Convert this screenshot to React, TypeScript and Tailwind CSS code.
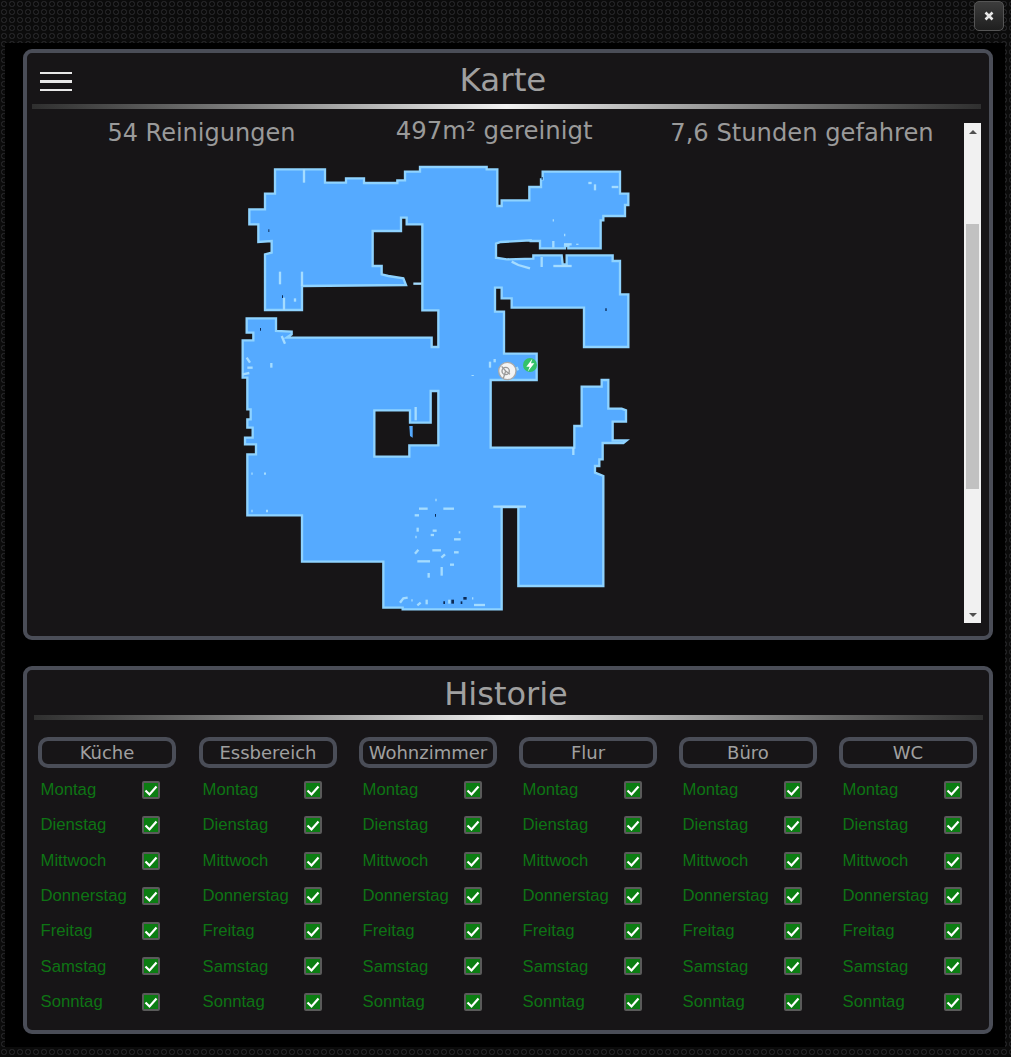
const outline = `M105 25 L255 25 L255 65 L318 65 L318 52 L372 52 L372 66 L472 66 L472 58 L495 58 L495 32 L540 32 L540 18 L740 18 L740 25 L772 25 L772 135 L785 135 L785 118 L868 118 L868 78 L903 78 L903 55 L908 55 L908 32 L1140 32 L1140 98 L1165 98 L1165 132 L1155 132 L1155 165 L1090 165 L1090 178 L1082 178 L1082 262 L985 262 L985 255 L975 255 L975 262 L900 262 L900 240 L872 240 L872 238 L782 243 L768 248 L768 290 L800 295 L880 293 L880 283 L965 283 L968 310 L980 310 L980 283 L1118 283 L1118 300 L1140 300 L1140 400 L1165 400 L1165 558 L1032 558 L1032 440 L815 440 L815 412 L785 412 L785 380 L765 380 L765 452 L792 452 L792 578 L890 578 L890 657 L752 657 L752 860 L1003 860 L1003 795 L1025 795 L1025 677 L1085 677 L1085 657 L1105 657 L1105 743 L1145 743 L1158 748 L1158 782 L1118 782 L1118 838 L1160 838 L1150 846 L1088 846 L1088 895 L1078 895 L1078 915 L1065 915 L1065 935 L1090 945 L1090 1275 L835 1275 L835 1038 L785 1038 L785 1345 L488 1345 L488 1340 L430 1340 L430 1202 L186 1202 L186 1063 L22 1063 L22 880 L48 880 L48 850 L15 850 L15 830 L38 830 L38 800 L22 800 L22 775 L32 775 L32 745 L22 745 L22 650 L8 650 L8 538 L40 538 L40 515 L20 515 L20 472 L108 472 L108 510 L155 512 L155 520 L140 530 L575 530 L575 558 L595 558 L595 448 L547 448 L547 190 L500 190 L500 170 L483 170 L483 210 L398 210 L398 315 L425 315 L425 340 L445 345 L490 352 L498 372 L186 375 L186 447 L75 447 L75 280 L95 275 L95 240 L55 243 L55 190 L28 190 L28 145 L75 145 L75 98 L105 98 Z M403 748 L510 748 L510 785 L572 785 L572 690 L595 690 L595 853 L508 853 L508 887 L403 887 Z`;

const walls = [
  "M192 25 L192 65", "M1045 66 L1055 66", "M1065 70 L1065 88", "M1115 78 L1135 78", "M938 178 L942 178", "M972 222 L976 222",
  "M940 240 L940 260", "M972 250 L995 250", "M1012 248 L1012 252", "M815 302 L835 312 L870 322", "M905 288 L905 318", "M940 315 L995 315",
  "M120 332 L120 370", "M186 332 L186 375", "M165 412 L165 422", "M132 410 L132 447", "M520 368 L545 368", "M125 525 L135 548",
  "M20 590 L30 605", "M22 620 L38 620", "M8 640 L28 636", "M94 606 L94 620", "M750 602 L750 620", "M764 594 L764 604", "M830 618 L834 628", "M698 642 L698 645",
  "M527 738 L527 778", "M1000 860 L1000 882",
  "M34 938 L38 938", "M72 938 L78 938", "M34 1050 L38 1050", "M78 1050 L84 1050",
  "M586 1017 L590 1017", "M537 1043 L563 1043", "M610 1043 L642 1043", "M524 1063 L537 1063", "M533 1100 L533 1112", "M572 1122 L582 1122", "M578 1109 L590 1109",
  "M526 1128 L530 1128", "M656 1114 L661 1114", "M642 1135 L662 1135", "M525 1178 L535 1166", "M577 1168 L603 1168", "M604 1190 L615 1180", "M642 1174 L656 1174",
  "M532 1201 L570 1201", "M630 1211 L642 1211", "M605 1218 L605 1244", "M566 1236 L566 1250", "M480 1325 L490 1312 L503 1310", "M514 1318 L518 1318",
  "M532 1333 L542 1325", "M560 1316 L560 1330", "M628 1316 L628 1328", "M696 1312 L700 1312", "M702 1332 L735 1332", "M760 1037 L858 1037",
];
const darks = ["M85 209 L88 209","M126 407 L129 407","M60 505 L63 505","M905 52 L908 52","M1096 446 L1100 446","M585 1063 L588 1063","M610 1325 L615 1325","M638 1316 L638 1328","M662 1325 L667 1325","M670 1312 L680 1312"];

function FloorMap() {
  return (
    <svg viewBox="0 0 1200 1380" className="block w-[400px] h-[460px] ml-[213px] mt-[16px]">
      <path d={outline} fill="#55aaff" fillRule="evenodd" stroke="#8fd3ff" strokeWidth="7" strokeLinejoin="miter" />
      {walls.map((d, i) => <path key={i} d={d} fill="none" stroke="#a5dcff" strokeWidth="7" />)}
      {darks.map((d, i) => <path key={i} d={d} fill="none" stroke="#0c2a55" strokeWidth="8" />)}
      <path d="M508 795 L518 795 L518 830 L510 825 Z" fill="#55aaff" />
      <circle cx="870" cy="612" r="21" fill="#34c26a" />
      <path d="M877 593 L859 617 L869 617 L863 632 L883 607 L873 607 Z" fill="#fff" />
      <circle cx="802" cy="630" r="26" fill="#f4f4f4" stroke="#a9a9a9" strokeWidth="4" />
      <circle cx="797" cy="630" r="11" fill="none" stroke="#9a9a9a" strokeWidth="4" />
      <path d="M797 630 L785 616 M797 630 L810 640 M797 630 L790 652" stroke="#9a9a9a" strokeWidth="4" />
    </svg>
  );
}

function Rule({ className }: { className: string }) {
  return <div className={`h-[5px] bg-gradient-to-r from-[#2f2f2f] via-[#f2f2f2] to-[#2f2f2f] ${className}`} />;
}

function Scrollbar() {
  return (
    <div className="w-[17px] h-[500px] bg-[#f1f1f1] flex flex-col items-center shrink-0">
      <div className="h-[17px] flex items-center justify-center">
        <div className="w-0 h-0 border-x-[4px] border-x-transparent border-b-[4px] border-b-[#505050]" />
      </div>
      <div className="w-[13px] h-[265px] mt-[84px] bg-[#c1c1c1]" />
      <div className="flex-1" />
      <div className="h-[17px] flex items-center justify-center">
        <div className="w-0 h-0 border-x-[4px] border-x-transparent border-t-[4px] border-t-[#505050]" />
      </div>
    </div>
  );
}

const rooms = ["Küche", "Essbereich", "Wohnzimmer", "Flur", "Büro", "WC"];
const days = ["Montag", "Dienstag", "Mittwoch", "Donnerstag", "Freitag", "Samstag", "Sonntag"];

function Check() {
  return (
    <div className="w-[18px] h-[18px] bg-[#0b7d12] border-2 border-[#5a5a5a] rounded-[2px] flex items-center justify-center shrink-0">
      <svg viewBox="0 0 14 14" className="w-[14px] h-[14px]">
        <path d="M1.5 7.5 L5.5 11.5 L12.5 3.5" fill="none" stroke="#fff" strokeWidth="2.2" />
      </svg>
    </div>
  );
}

function RoomColumn({ name, first }: { name: string; first: boolean }) {
  return (
    <div className={first ? "w-[161px] shrink-0" : "w-[160px] shrink-0"}>
      <div className="w-[138px] h-[31px] border-[4px] border-[#4a4d57] rounded-[10px] flex items-center justify-center text-[18px] text-[#a0a0a0] font-['DejaVu_Sans',sans-serif]">
        {name}
      </div>
      <div className="mt-[4px]">
        {days.map((d) => (
          <div key={d} className="h-[35.3px] flex items-center relative">
            <span className={`${first ? "ml-[2.5px]" : "ml-[3.5px]"} text-[16.7px] text-[#0e7414] font-['Liberation_Sans',sans-serif]`}>{d}</span>
            <div className={`absolute top-[9px] ${first ? "left-[104px]" : "left-[105px]"}`}>
              <Check />
            </div>
          </div>
        ))}
      </div>
    </div>
  );
}

export default function App() {
  return (
    <div className="w-[1011px] h-[1057px] overflow-hidden bg-[#0b0b0b] bg-[radial-gradient(circle,transparent_1.6px,#222224_2px,#222224_2.8px,transparent_3.3px)] bg-size-[8px_8px] font-['DejaVu_Sans',sans-serif]">
      <div className="h-[43px] flex justify-end pr-[7px] pt-[1px]">
        <button className="w-[30px] h-[30px] rounded-[5px] border border-[#555] bg-gradient-to-b from-[#3d3d3d] to-[#1f1f1f] flex items-center justify-center">
          <svg viewBox="0 0 10 10" className="w-[10px] h-[10px]">
            <path d="M1.5 1.5 L8.5 8.5 M8.5 1.5 L1.5 8.5" stroke="#e8e8e8" strokeWidth="2.6" />
          </svg>
        </button>
      </div>
      <div className="ml-[5px] w-[1000px] h-[1004px] bg-black pl-[18px] pt-[6px]">
        <section className="w-[970px] h-[591px] border-[4px] border-[#4a4d57] rounded-[9px] bg-[#171517] pt-[4px]">
          <div className="h-[47px] relative flex items-center justify-center">
            <div className="absolute left-[13px] top-[15px] w-[32px] flex flex-col gap-[6.3px]">
              <div className="h-[2.2px] bg-[#e8e8e8]" />
              <div className="h-[2.2px] bg-[#e8e8e8]" />
              <div className="h-[2.2px] bg-[#e8e8e8]" />
            </div>
            <h1 className="text-[32.5px] text-[#a0a0a0] pr-[10px] leading-none">Karte</h1>
          </div>
          <Rule className="ml-[5px] w-[949px]" />
          <div className="flex mt-[14px]">
            <div className="w-[937px]">
              <div className="flex text-[24px] text-[#9a9a9a] leading-none h-[24px] -mt-[2px] whitespace-nowrap">
                <span className="w-[350px] text-center pl-[5px]">54 Reinigungen</span>
                <span className="w-[240px] text-center -mt-[2px] ml-[5.5px] text-[24.4px]">497m² gereinigt</span>
                <span className="w-[330px] text-center ml-[28px] text-[24.2px]">7,6 Stunden gefahren</span>
              </div>
              <FloorMap />
            </div>
            <Scrollbar />
          </div>
        </section>
        <section className="mt-[26px] w-[970px] h-[368px] border-[4px] border-[#4a4d57] rounded-[9px] bg-[#171517]">
          <div className="h-[45px] pt-[2px] flex items-center justify-center">
            <h2 className="text-[32px] text-[#a0a0a0] pr-[4px] leading-none">Historie</h2>
          </div>
          <Rule className="ml-[7px] w-[949px]" />
          <div className="flex ml-[11px] mt-[17px]">
            {rooms.map((r, i) => <RoomColumn key={r} name={r} first={i === 0} />)}
          </div>
        </section>
      </div>
    </div>
  );
}
